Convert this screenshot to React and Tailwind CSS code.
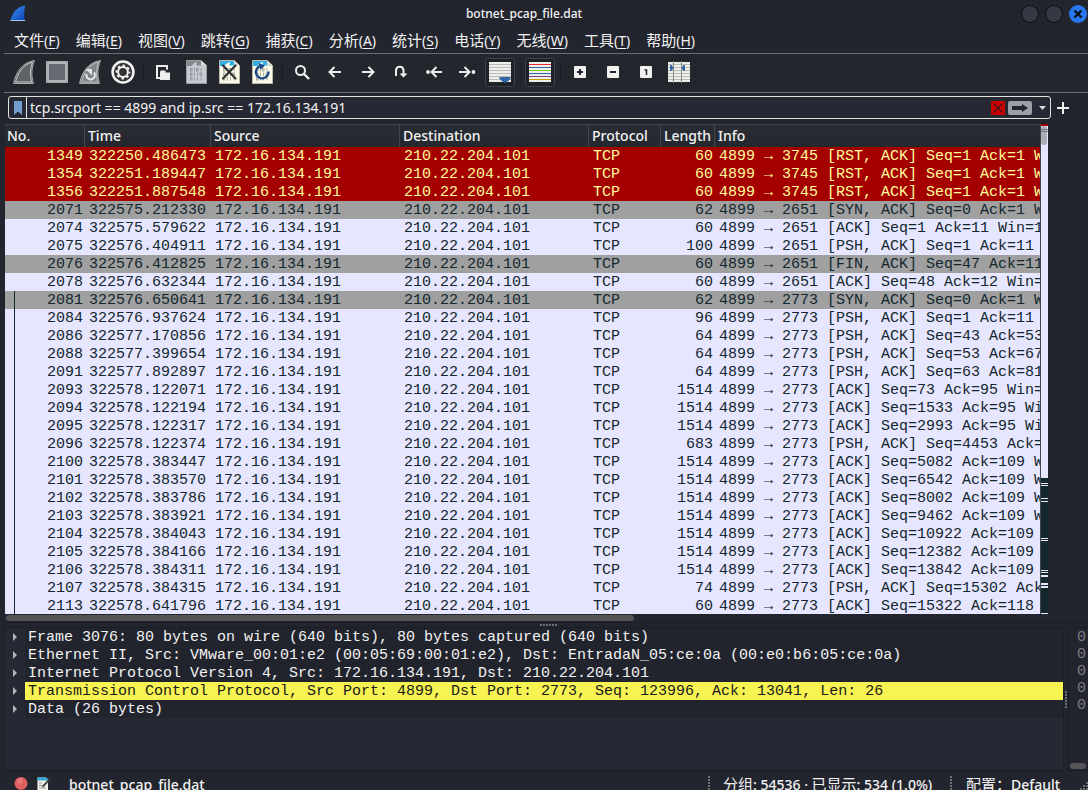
import React from "react";

const ROWS = [
  [1349, "322250.486473", 60, "3745", "[RST, ACK] Seq=1 Ack=1 W", "r"],
  [1354, "322251.189447", 60, "3745", "[RST, ACK] Seq=1 Ack=1 W", "r"],
  [1356, "322251.887548", 60, "3745", "[RST, ACK] Seq=1 Ack=1 W", "r"],
  [2071, "322575.212330", 62, "2651", "[SYN, ACK] Seq=0 Ack=1 W", "g"],
  [2074, "322575.579622", 60, "2651", "[ACK] Seq=1 Ack=11 Win=1", "t"],
  [2075, "322576.404911", 100, "2651", "[PSH, ACK] Seq=1 Ack=11", "t"],
  [2076, "322576.412825", 60, "2651", "[FIN, ACK] Seq=47 Ack=11", "g"],
  [2078, "322576.632344", 60, "2651", "[ACK] Seq=48 Ack=12 Win=", "t"],
  [2081, "322576.650641", 62, "2773", "[SYN, ACK] Seq=0 Ack=1 W", "g"],
  [2084, "322576.937624", 96, "2773", "[PSH, ACK] Seq=1 Ack=11", "t"],
  [2086, "322577.170856", 64, "2773", "[PSH, ACK] Seq=43 Ack=53", "t"],
  [2088, "322577.399654", 64, "2773", "[PSH, ACK] Seq=53 Ack=67", "t"],
  [2091, "322577.892897", 64, "2773", "[PSH, ACK] Seq=63 Ack=81", "t"],
  [2093, "322578.122071", 1514, "2773", "[ACK] Seq=73 Ack=95 Win=", "t"],
  [2094, "322578.122194", 1514, "2773", "[ACK] Seq=1533 Ack=95 Wi", "t"],
  [2095, "322578.122317", 1514, "2773", "[ACK] Seq=2993 Ack=95 Wi", "t"],
  [2096, "322578.122374", 683, "2773", "[PSH, ACK] Seq=4453 Ack=", "t"],
  [2100, "322578.383447", 1514, "2773", "[ACK] Seq=5082 Ack=109 W", "t"],
  [2101, "322578.383570", 1514, "2773", "[ACK] Seq=6542 Ack=109 W", "t"],
  [2102, "322578.383786", 1514, "2773", "[ACK] Seq=8002 Ack=109 W", "t"],
  [2103, "322578.383921", 1514, "2773", "[ACK] Seq=9462 Ack=109 W", "t"],
  [2104, "322578.384043", 1514, "2773", "[ACK] Seq=10922 Ack=109", "t"],
  [2105, "322578.384166", 1514, "2773", "[ACK] Seq=12382 Ack=109", "t"],
  [2106, "322578.384311", 1514, "2773", "[ACK] Seq=13842 Ack=109", "t"],
  [2107, "322578.384315", 74, "2773", "[PSH, ACK] Seq=15302 Ack", "t"],
  [2113, "322578.641796", 60, "2773", "[ACK] Seq=15322 Ack=118", "t"],
];

const ROW_STYLE = {
  r: "bg-[#a40000] text-[#fffc9c]",
  g: "bg-[#a0a0a0] text-[#12272e]",
  t: "bg-[#e7e6ff] text-[#12272e]",
};

const MENUS = [
  ["文件", "F"], ["编辑", "E"], ["视图", "V"], ["跳转", "G"], ["捕获", "C"], ["分析", "A"],
  ["统计", "S"], ["电话", "Y"], ["无线", "W"], ["工具", "T"], ["帮助", "H"],
];

const COLUMNS = ["No.", "Time", "Source", "Destination", "Protocol", "Length", "Info"];

const TREE = [
  "Frame 3076: 80 bytes on wire (640 bits), 80 bytes captured (640 bits)",
  "Ethernet II, Src: VMware_00:01:e2 (00:05:69:00:01:e2), Dst: EntradaN_05:ce:0a (00:e0:b6:05:ce:0a)",
  "Internet Protocol Version 4, Src: 172.16.134.191, Dst: 210.22.204.101",
  "Transmission Control Protocol, Src Port: 4899, Dst Port: 2773, Seq: 123996, Ack: 13041, Len: 26",
  "Data (26 bytes)",
];

const ink = { fill: "none", stroke: "#eeeeee", strokeWidth: 2, strokeLinecap: "butt" };

function Bits({ color }) {
  return (
    <g fill="none" stroke={color} strokeWidth="0.9">
      {[12.5, 17, 21.5].map((y, i) => (
        <g key={y}>
          <rect x="10.5" y={y} width="1.5" height="2.5" />
          <path d={`M14.500 ${y - 0.5}v3.500`} />
          {i === 0 ? <rect x="16.500" y={y} width="1.500" height="2.500" /> : <path d={`M17.500 ${y - 0.5}v3.500`} />}
          {i === 1 ? <rect x="20" y={y} width="1.500" height="2.500" /> : <path d={`M21 ${y - 0.5}v3.500`} />}
        </g>
      ))}
    </g>
  );
}

function Sheet({ head, body, edge, bits }) {
  return (
    <g>
      <path d="M6.5 4.5H21L26.5 9.5V27.5H6.5Z" fill={body} stroke={edge} />
      <path d="M7 5H20.500L25 9.500H16.500C16.300 8 16.600 6.800 17.500 5.700C14.500 6.500 12.700 8 11.500 10H7Z" fill={head} />
      <path d="M21 4.500V9.500H26.500Z" fill="#dcdcd8" />
      <Bits color={bits} />
    </g>
  );
}

const FIN = "M5.500 27.500C8 16 14 6.500 26.500 4.500C23.500 12 23 19 25.500 27.500Z";

const ICONS = {
  start: (
    <g>
      <path d={FIN} fill="#5f6268" stroke="#a9abad" strokeWidth="1" />
      <path d="M7.500 26C10 17 15 8.500 24.500 6.200C22 13 21.800 19 23.700 26Z" fill="none" stroke="#c5c7c8" strokeWidth="1" />
    </g>
  ),
  stop: (
    <g>
      <rect x="5.500" y="5.500" width="21" height="21" fill="#666970" stroke="#a4a6a9" />
      <rect x="7" y="7" width="18" height="18" fill="none" stroke="#c9cacb" strokeWidth="1.500" />
    </g>
  ),
  restart: (
    <g>
      <path d={FIN} fill="#808388" stroke="#a9abad" />
      <path d="M7.500 26C10 17 15 8.500 24.500 6.200C22 13 21.800 19 23.700 26Z" fill="none" stroke="#b8babb" />
      <path d="M20 16.500A4.300 4.300 0 1 1 12.500 18" fill="none" stroke="#e3e4e5" strokeWidth="2.200" />
      <path d="M11.500 13H18V19.500Z" fill="#e3e4e5" />
    </g>
  ),
  options: (
    <g>
      <circle cx="16" cy="16" r="11.700" fill="#f5f5f4" />
      <circle cx="16" cy="16" r="9.200" fill="#303236" />
      <circle cx="16" cy="16" r="4.900" fill="none" stroke="#f5f5f4" strokeWidth="2" />
      <circle cx="16" cy="16" r="6.500" fill="none" stroke="#f5f5f4" strokeWidth="1.800" strokeDasharray="2.550 2.555" strokeDashoffset="1.275" />
    </g>
  ),
  open: (
    <g>
      <path d="M14 22H10V10H20V13.500" fill="none" stroke="#eeeeee" strokeWidth="2" />
      <path d="M13 15.500L14 14.500H18.500V16.500H23V24H13Z" fill="#eeeeee" />
    </g>
  ),
  save: <Sheet head="#85888c" body="#c6c9cf" edge="#9b9da1" bits="#93969b" />,
  close: (
    <g>
      <Sheet head="#32b0e6" body="#fbfbe8" edge="#b9b9ab" bits="#a0a29f" />
      <path d="M10 9.500L22.500 22.500M22.500 9.500L10 22.500" fill="none" stroke="#2e3436" strokeWidth="2.200" strokeLinecap="round" />
    </g>
  ),
  reload: (
    <g>
      <Sheet head="#32b0e6" body="#fbfbe8" edge="#b9b9ab" bits="#a0a29f" />
      <path d="M22.500 15.500A6.300 6.300 0 1 1 14.500 10" fill="none" stroke="#204a87" strokeWidth="2.400" />
      <path d="M12.500 7L19 9.500L14.500 13.800Z" fill="#204a87" />
    </g>
  ),
  find: (
    <g {...ink}>
      <circle cx="14.500" cy="14.500" r="4.500" />
      <path d="M18 18L23 23" strokeWidth="2.400" />
    </g>
  ),
  back: <path {...ink} d="M22 16H11M15.500 11L10.500 16L15.500 21" />,
  forward: <path {...ink} d="M10 16H21M16.500 11L21.500 16L16.500 21" />,
  jump: (
    <g {...ink}>
      <path d="M11 20V14A3.800 3.800 0 0 1 18.500 14V19" />
      <path d="M14.500 17.500H22.500L18.500 21.500Z" fill="#eeeeee" stroke="none" />
    </g>
  ),
  first: (
    <g {...ink}>
      <path d="M24 16H14M18.500 11L13.500 16L18.500 21" />
      <circle cx="10" cy="16" r="1.900" fill="#eeeeee" stroke="none" />
    </g>
  ),
  last: (
    <g {...ink}>
      <path d="M8 16H18M13.500 11L18.500 16L13.500 21" />
      <circle cx="22.500" cy="16" r="1.900" fill="#eeeeee" stroke="none" />
    </g>
  ),
  scroll: (
    <g>
      <rect x="5" y="6" width="22" height="20" fill="#eeeeec" />
      <path d="M5 8.500H27M5 11.500H27M5 14.500H27M5 17.500H27M5 20.500H27M5 23.500H27" stroke="#babdb6" />
      <path d="M15.500 21H26.500V23L22.500 26.500H19.500L15.500 23Z" fill="#3465a4" />
    </g>
  ),
  color: (
    <g shapeRendering="crispEdges">
      <rect x="5" y="6" width="22" height="20" fill="#eeeeec" />
      <path d="M5 8.500H27" stroke="#ef2929" />
      <path d="M5 11.500H27" stroke="#3465a4" />
      <path d="M5 14.500H27" stroke="#73d216" />
      <path d="M5 17.500H27" stroke="#3465a4" />
      <path d="M5 20.500H27" stroke="#75507b" />
      <path d="M5 23.500H27" stroke="#c4a000" />
    </g>
  ),
  zoomIn: (
    <g>
      <rect x="10" y="10" width="12" height="12" rx="1" fill="#f0f0ef" />
      <path d="M13 16H19M16 13V19" stroke="#23252e" strokeWidth="2" />
    </g>
  ),
  zoomOut: (
    <g>
      <rect x="10" y="10" width="12" height="12" rx="1" fill="#f0f0ef" />
      <path d="M13 16H19" stroke="#23252e" strokeWidth="2" />
    </g>
  ),
  zoomOne: (
    <g>
      <rect x="10" y="10" width="12" height="12" rx="1" fill="#f0f0ef" />
      <path d="M14.500 14H16.500V19" fill="none" stroke="#23252e" strokeWidth="1.500" />
    </g>
  ),
  resize: (
    <g>
      <rect x="5" y="6" width="22" height="20" fill="#eeeeec" />
      <path d="M5 8.500H27M5 11.500H27M5 14.500H27M5 17.500H27M5 20.500H27M5 23.500H27" stroke="#babdb6" />
      <path d="M10.500 5V27M18.500 5V27" stroke="#888a85" />
      <path d="M7 9H8.500L10.500 12L8.500 15H7ZM22 9H20.500L18.500 12L20.500 15H22Z" fill="#3465a4" />
    </g>
  ),
};

const TOOLBAR = [
  [["start", "开始捕获"], ["stop", "停止捕获"], ["restart", "重新开始捕获"], ["options", "捕获选项"]],
  [["open", "打开"], ["save", "保存"], ["close", "关闭"], ["reload", "重新加载"]],
  [["find", "查找分组"], ["back", "上一分组"], ["forward", "下一分组"], ["jump", "转到分组"], ["first", "首个分组"], ["last", "最新分组"], ["scroll", "自动滚动"]],
  [["color", "着色"]],
  [["zoomIn", "放大"], ["zoomOut", "缩小"], ["zoomOne", "普通大小"], ["resize", "调整列宽"]],
];

function ToolButton({ name, label }) {
  const pressed = name === "scroll" || name === "color";
  return (
    <button aria-label={label} aria-pressed={pressed} className="flex h-[33px] w-[33px]">
      <svg width="33" height="33" viewBox="0 0 33 33" aria-hidden="true">
        {pressed && <rect x="1.500" y="2.500" width="29" height="28" rx="2" fill="#1e2027" stroke="#3f424a" />}
        {ICONS[name]}
      </svg>
    </button>
  );
}

function Dots({ vertical, count = 6 }) {
  return (
    <span className={vertical ? "flex flex-col gap-px" : "flex gap-px"}>
      {Array.from({ length: count }, (_, i) => (
        <span key={i} className="h-0.5 w-0.5 bg-[#6d6e74]" />
      ))}
    </span>
  );
}

function Minimap() {
  return (
    <svg width="7" height="490" viewBox="0 0 7 490" shapeRendering="crispEdges" aria-hidden="true">
      <rect width="8" height="490" fill="#e7e6ff" />
      <rect width="8" height="2" fill="#a40000" />
      <rect y="354" width="8" height="135" fill="#12272e" />
      <path d="M0 359.500H8M0 361.500H8M0 374.500H8M0 377.500H8M0 414.500H8M0 416.500H8M0 446.500H8M0 448.500H8" stroke="#e7e6ff" />
      <path d="M0 451.500H8M0 460H8M0 463H8" stroke="#e7e6ff" strokeWidth="2" />
      <rect y="2" width="6" height="19" rx="3" fill="#adadb8" shapeRendering="auto" />
      <path d="M0 5.500H7M0 7.500H7" stroke="#777780" />
    </svg>
  );
}

export default function App() {
  return (
    <div className="flex h-screen flex-col overflow-hidden bg-[#23252e] font-['Noto_Sans','Noto_Sans_CJK_SC',sans-serif] text-[14px] text-[#f2f2f2] [&>*]:shrink-0">
      <header className="flex h-[27px] items-center">
        <div className="pl-2.5">
          <svg width="17" height="17" viewBox="0 0 17 17" aria-hidden="true">
            <defs>
              <linearGradient id="fin" x1="0" y1="0" x2="1" y2="1">
                <stop offset="0" stopColor="#3f93f5" />
                <stop offset="1" stopColor="#0a3fb0" />
              </linearGradient>
            </defs>
            <path d="M0.500 15.500C2 8 7 1.500 15.500 0.500C14 5 13.800 10 15 15.500Z" fill="url(#fin)" />
            <path d="M0.500 15.500H15" stroke="#a9c5ee" />
          </svg>
        </div>
        <h1 className="flex-1 text-center text-[12px] leading-[18px] font-medium">botnet_pcap_file.dat</h1>
        <div className="flex gap-1.5 pr-px">
          <button aria-label="最小化" className="h-[18px] w-[18px] rounded-full border border-[#0b0c0f] bg-[#353843]" />
          <button aria-label="最大化" className="h-[18px] w-[18px] rounded-full border border-[#0b0c0f] bg-[#353843]" />
          <button aria-label="关闭窗口" className="h-[18px] w-[18px] rounded-full bg-[#2777f3]">
            <svg width="18" height="18" viewBox="0 0 18 18" aria-hidden="true">
              <path d="M5.500 5.500L12.500 12.500M12.500 5.500L5.500 12.500" stroke="#0e1116" strokeWidth="2.400" />
            </svg>
          </button>
        </div>
      </header>

      <nav className="ml-1 flex h-[27px] items-center gap-4 border-b border-[#6b6c74] pl-2.5">
        {MENUS.map(([name, key]) => (
          <button key={key} className="leading-[26px] whitespace-nowrap">
            <span className="text-[15px]">{name}</span>(<span className="underline underline-offset-2">{key}</span>)
          </button>
        ))}
      </nav>

      <div className="ml-1 flex h-[39px] border-b border-[#6b6c74] bg-[#23262d] pt-0.5 pl-1">
        {TOOLBAR.map((group, g) => (
          <div key={g} className="flex">
            {g > 0 && <span className="mx-[3px] mt-2 h-5 w-px bg-[#1c1e24]" />}
            {group.map(([name, label]) => (
              <ToolButton key={name} name={name} label={label} />
            ))}
          </div>
        ))}
      </div>

      <div className="mt-[3px] ml-2 flex h-[23px] items-center">
        <div className="flex h-[23px] flex-1 items-center rounded-[3px] border border-[#e4e2de] bg-[#262833]">
          <button aria-label="书签" className="flex h-[21px] w-[18px] items-center justify-center border-r border-[#e4e2de]">
            <svg width="8" height="14" viewBox="0 0 8 14" aria-hidden="true">
              <path d="M0 0H8V14L4 10.500L0 14Z" fill="#729fcf" />
            </svg>
          </button>
          <input
            aria-label="显示过滤器"
            defaultValue="tcp.srcport == 4899 and ip.src == 172.16.134.191"
            className="h-[21px] min-w-0 flex-1 bg-transparent pl-[3px] outline-none"
          />
          <button aria-label="清除过滤器" className="mr-[3px]">
            <svg width="14" height="14" viewBox="0 0 14 14" aria-hidden="true">
              <rect width="14" height="14" rx="1.500" fill="#cc0000" />
              <path d="M2.500 2.500L11.500 11.500M11.500 2.500L2.500 11.500" stroke="#3b1518" strokeWidth="1.300" />
            </svg>
          </button>
          <button aria-label="应用过滤器" className="mr-[7px]">
            <svg width="24" height="14" viewBox="0 0 24 14" aria-hidden="true">
              <rect width="24" height="14" rx="2" fill="#9c9ea8" />
              <path d="M4 5H14V3L20 7L14 11V9H4Z" fill="#23252e" />
            </svg>
          </button>
          <button aria-label="过滤器历史" className="mr-1">
            <svg width="7" height="4" viewBox="0 0 7 4" aria-hidden="true">
              <path d="M0 0H7L3.500 4Z" fill="#d9d9d6" />
            </svg>
          </button>
        </div>
        <button aria-label="添加过滤器按钮" className="mr-[19px] ml-1.5">
          <svg width="12" height="12" viewBox="0 0 12 12" aria-hidden="true">
            <path d="M0 6H12M6 0V12" stroke="#eeeeee" strokeWidth="2" />
          </svg>
        </button>
      </div>

      <section className="mt-[5px] mr-10 ml-[5px] flex h-[490px] overflow-hidden">
        <div className="min-w-0 flex-1 overflow-hidden border-r border-[#44464d]">
          <table className="w-full table-fixed border-separate border-spacing-0">
            <colgroup>
              <col className="w-[80px]" />
              <col className="w-[126px]" />
              <col className="w-[189px]" />
              <col className="w-[189px]" />
              <col className="w-[72px]" />
              <col className="w-[54px]" />
              <col />
            </colgroup>
            <thead>
              <tr className="bg-linear-to-b from-[#2b2d35] to-[#23272e]">
                {COLUMNS.map((c) => (
                  <th key={c} className="border-t border-r border-t-[#404249] border-r-[#44464d] p-0 pl-[3px] text-left leading-[22px] font-medium first:pl-0.5 last:border-r-0">
                    {c}
                  </th>
                ))}
              </tr>
            </thead>
            <tbody className="font-['Liberation_Mono',monospace] text-[15px] leading-4 whitespace-pre">
              {ROWS.map(([no, time, len, port, info, kind]) => (
                <tr key={no} className={ROW_STYLE[kind]}>
                  <td className="p-0">
                    <span className={no >= 2081 ? "ml-[9px] block border-l border-[#12272e] pt-0.5 pr-0.5 text-right" : "block pt-0.5 pr-0.5 text-right"}>
                      {no}
                    </span>
                  </td>
                  <td className="p-0 pt-0.5 pl-1">{time}</td>
                  <td className="p-0 pt-0.5 pl-1">172.16.134.191</td>
                  <td className="p-0 pt-0.5 pl-1">210.22.204.101</td>
                  <td className="p-0 pt-0.5 pl-1">TCP</td>
                  <td className="p-0 pt-0.5 pr-0.5 text-right">{len}</td>
                  <td className="overflow-hidden p-0 pt-0.5 pl-1">{`4899 → ${port} ${info}`}</td>
                </tr>
              ))}
            </tbody>
          </table>
        </div>
        <Minimap />
      </section>

      <div className="ml-1.5 flex h-[9px] items-center border-b border-[#1b1d23]">
        <div className="h-1.5 w-[58%] rounded-full bg-[#555555]" />
      </div>
      <div className="ml-2 flex h-1 items-center justify-center">
        <Dots />
      </div>

      <div className="ml-1 flex h-[144px]">
        <div className="min-w-0 flex-1 overflow-hidden border border-[#1b1d23] bg-[#262833]">
          <ul className="font-['Liberation_Mono',monospace] text-[15px] leading-4 whitespace-pre">
            {TREE.map((line, i) => (
              <li key={i} className="flex">
                <button aria-label="展开" className="flex w-5 items-center pl-2">
                  <svg width="4" height="8" viewBox="0 0 4 8" aria-hidden="true">
                    <path d="M0 0L4 4L0 8Z" fill="#b4b5b8" />
                  </svg>
                </button>
                <span className={i === 3 ? "flex-1 bg-[#f7f352] pt-0.5 pl-[3px] text-[#1a1a1a]" : "flex-1 bg-[#22242d] pt-0.5 pl-[3px]"}>{line}</span>
              </li>
            ))}
          </ul>
        </div>
        <div className="flex w-1 items-center justify-center">
          <Dots vertical />
        </div>
        <div className="flex w-5 flex-col justify-between overflow-hidden border border-r-0 border-[#1b1d23]">
          <div className="pt-px pl-2 font-['Liberation_Mono',monospace] text-[15px] leading-[17px] text-[#7b7c80]">
            {[0, 1, 2, 3, 4].map((n) => (
              <div key={n}>0</div>
            ))}
          </div>
          <div className="mr-0.5 mb-px ml-px h-1.5 rounded-full bg-[#555559]" />
        </div>
      </div>

      <footer className="flex h-[26px] items-center font-medium">
        <button aria-label="专家信息" className="ml-3.5 flex h-[26px]">
          <svg width="14" height="26" viewBox="0 0 14 26" aria-hidden="true">
            <circle cx="7" cy="12.500" r="6.500" fill="#dd5f5f" />
            <circle cx="6" cy="10" r="3" fill="#f09090" opacity="0.500" />
          </svg>
        </button>
        <button aria-label="捕获文件注释" className="ml-[9px] flex h-[26px]">
          <svg width="14" height="26" viewBox="0 -2 14 26" aria-hidden="true">
            <path d="M0.500 4.500H9L11 6.500V17H0.500Z" fill="#f2f2e6" />
            <path d="M0.500 4.500H9L11 6.500V7.500H0.500Z" fill="#32a6dc" />
            <path d="M2 10H5M2 12.500H5M2 15H9" stroke="#999b95" />
            <path d="M13 4.500L5.500 12.500L5 14.500L7 13.800L14 6Z" fill="#3a3d40" />
          </svg>
        </button>
        <span className="ml-[18px] flex-1">botnet_pcap_file.dat</span>
        <Dots vertical />
        <span className="ml-[13px] w-[213px] whitespace-nowrap">
          <span className="text-[15px] font-normal">分组</span>: 54536 · <span className="text-[15px] font-normal">已显示</span>: 534 (1.0%)
        </span>
        <span className="ml-3.5">
          <Dots vertical />
        </span>
        <span className="ml-3.5 w-[94px] whitespace-nowrap">
          <span className="text-[15px] font-normal">配置：</span>Default
        </span>
        <svg width="28" height="22" viewBox="0 0 28 22" aria-hidden="true">
          <path d="M26 10h2M23 13h2M26 13h2M20 16h2M23 16h2M26 16h2" stroke="#6d6e74" strokeWidth="2" />
        </svg>
      </footer>
    </div>
  );
}
